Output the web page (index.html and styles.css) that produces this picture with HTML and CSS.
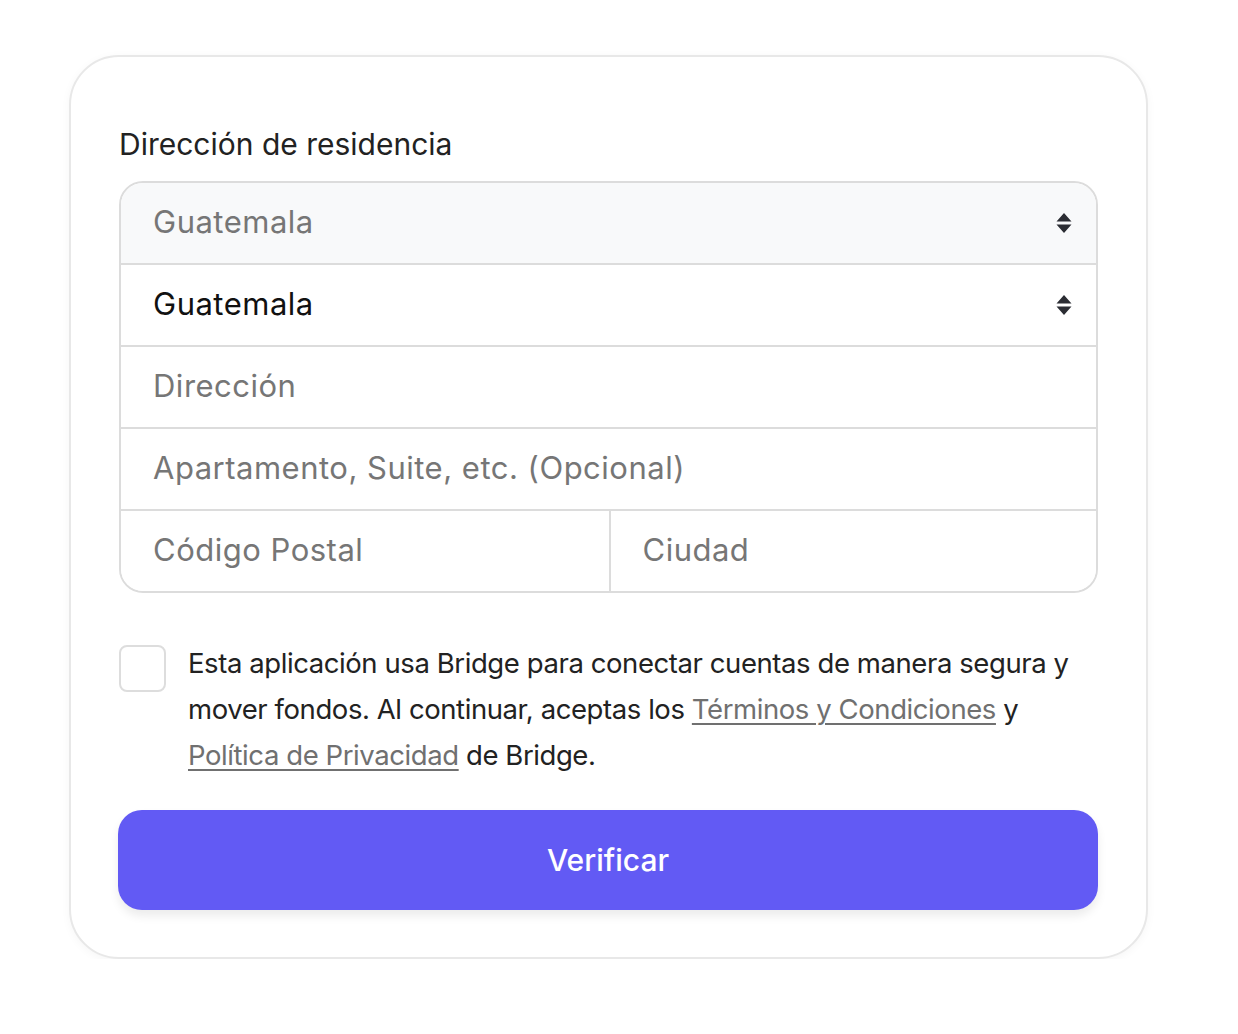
FILE: index.html
```html
<!DOCTYPE html>
<html lang="es">
<head>
<meta charset="utf-8">
<title>Dirección de residencia</title>
<link rel="stylesheet" href="styles.css">
</head>
<body>
<main class="page">
  <section class="card">
    <h2 class="title">Dirección de residencia</h2>
    <div class="group">
      <div class="row row-muted">
        <span class="value placeholder">Guatemala</span>
        <svg class="sorter" viewBox="0 0 16 22" width="16" height="22" aria-hidden="true"><path d="M8 1 L15.5 9.5 H0.5 Z M8 21 L15.5 12.5 H0.5 Z" fill="#2b2d33"/></svg>
      </div>
      <div class="row">
        <span class="value">Guatemala</span>
        <svg class="sorter" viewBox="0 0 16 22" width="16" height="22" aria-hidden="true"><path d="M8 1 L15.5 9.5 H0.5 Z M8 21 L15.5 12.5 H0.5 Z" fill="#2b2d33"/></svg>
      </div>
      <div class="row">
        <span class="value placeholder">Dirección</span>
      </div>
      <div class="row">
        <span class="value placeholder">Apartamento, Suite, etc. (Opcional)</span>
      </div>
      <div class="row row-split">
        <div class="cell"><span class="value placeholder">Código Postal</span></div>
        <div class="cell"><span class="value placeholder">Ciudad</span></div>
      </div>
    </div>
    <div class="consent">
      <span class="checkbox"></span>
      <p class="consent-text">Esta aplicación usa Bridge para conectar cuentas de manera segura y mover fondos. Al continuar, aceptas los <a href="#" class="link">Términos y Condiciones</a> y <a href="#" class="link">Política de Privacidad</a> de Bridge.</p>
    </div>
    <button class="submit" type="button">Verificar</button>
  </section>
</main>
</body>
</html>
```

FILE: styles.css
```css
* { box-sizing: border-box; }
html, body { margin: 0; padding: 0; background: #ffffff; }
body { font-family: Inter, "Noto Sans", sans-serif; color: #222222; }

.page {
  padding: 55px 0 0 69px;
}

.card {
  width: 1079px;
  height: 904px;
  border: 2px solid #e8e8e8;
  border-radius: 50px;
  background: #ffffff;
  box-shadow: 0 2px 10px rgba(0, 0, 0, 0.04);
  padding: 70px 48px 0 48px;
}

.title {
  margin: 0 0 20px 0;
  font-size: 30px;
  font-weight: 400;
  line-height: 34px;
  color: #222222;
}

.group {
  width: 979px;
  border: 2px solid #dcdcdc;
  border-radius: 24px;
  overflow: hidden;
}

.row {
  height: 82px;
  display: flex;
  align-items: center;
  justify-content: space-between;
  padding: 0 24px 4px 32px;
  border-top: 2px solid #dcdcdc;
  background: #ffffff;
}
.row:first-child { border-top: none; height: 80px; }
.row-muted { background: #f8f9fa; }

.value {
  font-size: 31px;
  letter-spacing: 0.5px;
  color: #111111;
}
.placeholder { color: #767676; }

.sorter { display: block; margin-top: 4px; }

.row-split {
  padding: 0;
  display: grid;
  grid-template-columns: 1fr 1fr;
}
.cell {
  height: 100%;
  display: flex;
  align-items: center;
  padding: 0 0 4px 32px;
}
.cell + .cell { border-left: 2px solid #dcdcdc; }

.consent {
  display: flex;
  align-items: flex-start;
  gap: 22px;
  margin-top: 50px;
}
.checkbox {
  flex: 0 0 auto;
  width: 47px;
  height: 47px;
  border: 2px solid #dddddd;
  border-radius: 8px;
  margin-top: 2px;
}
.consent-text {
  margin: -3px 0 0 0;
  font-size: 27.5px;
  line-height: 46px;
  color: #222222;
  letter-spacing: -0.42px;
}
.link {
  color: #707070;
  text-decoration: underline;
  text-decoration-thickness: 2px;
  text-underline-offset: 4px;
}

.submit {
  display: block;
  width: 980px;
  height: 100px;
  margin: 32px 0 0 -1px;
  border: none;
  border-radius: 24px;
  background: #625af4;
  color: #ffffff;
  font-family: Inter, "Noto Sans", sans-serif;
  font-size: 30px;
  font-weight: 500;
  box-shadow: 0 6px 10px rgba(0, 0, 0, 0.08);
}
```
